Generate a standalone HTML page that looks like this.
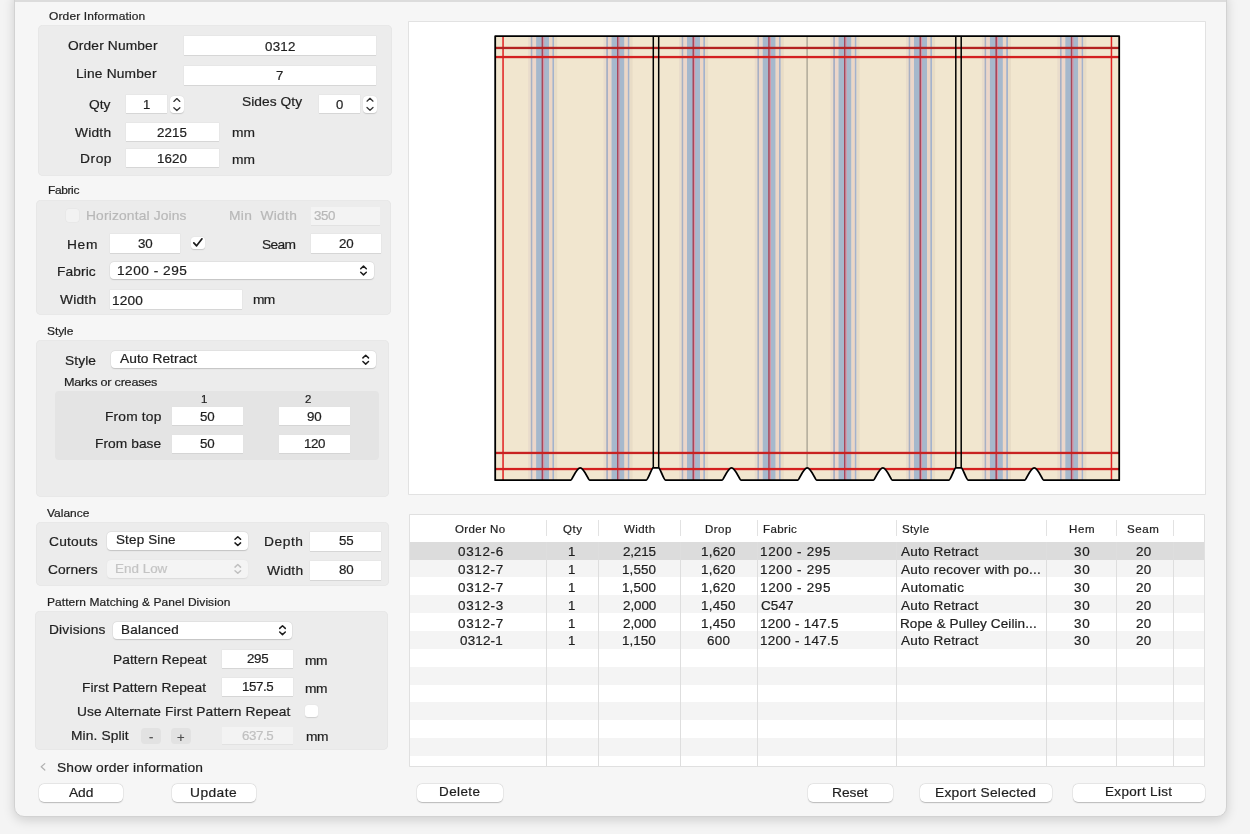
<!DOCTYPE html>
<html><head><meta charset="utf-8"><style>
html,body{margin:0;padding:0;width:1250px;height:834px;overflow:hidden;background:#f2f2f2;}
.t{position:absolute;white-space:pre;transform-origin:0 0;font-family:"Liberation Sans", sans-serif;-webkit-text-stroke:0.2px currentColor;}
#txt{position:absolute;left:0;top:0;width:1250px;height:834px;will-change:transform;}
#win{position:absolute;left:14px;top:-10px;width:1211px;height:825px;background:#f6f6f6;border:1px solid #d2d2d2;border-radius:10px;box-shadow:0 3px 12px rgba(0,0,0,0.16);}
</style></head><body>
<div style="position:absolute;left:0;top:0;width:1250px;height:834px;background:#f4f4f4"></div>
<div id="win"></div>
<div style="position:absolute;left:14.5px;top:0;width:1211px;height:1.6px;background:#dcdcdc"></div>
<div style="position:absolute;left:409.4px;top:22.4px;width:795.8px;height:472px;background:#fff;box-shadow:0 0 0 0.8px #dcdcdc;"></div>
<div style="position:absolute;left:38.00px;top:25.00px;width:353.50px;height:150.50px;background:#ececec;border-radius:5px;box-shadow:inset 0 0 0 0.6px #e4e4e4;"></div><div style="position:absolute;left:183.80px;top:36.20px;width:192.40px;height:19.00px;background:#fff;box-shadow:0 0.7px 0 #cfcfcf, 0 0 0 0.5px #e2e2e2;"></div><div style="position:absolute;left:183.80px;top:66.40px;width:192.40px;height:18.80px;background:#fff;box-shadow:0 0.7px 0 #cfcfcf, 0 0 0 0.5px #e2e2e2;"></div><div style="position:absolute;left:125.70px;top:95.20px;width:41.70px;height:18.20px;background:#fff;box-shadow:0 0.7px 0 #cfcfcf, 0 0 0 0.5px #e2e2e2;"></div><div style="position:absolute;left:319.00px;top:94.80px;width:41.00px;height:18.60px;background:#fff;box-shadow:0 0.7px 0 #cfcfcf, 0 0 0 0.5px #e2e2e2;"></div><div style="position:absolute;left:125.70px;top:122.60px;width:93.10px;height:18.40px;background:#fff;box-shadow:0 0.7px 0 #cfcfcf, 0 0 0 0.5px #e2e2e2;"></div><div style="position:absolute;left:125.70px;top:148.80px;width:93.10px;height:18.00px;background:#fff;box-shadow:0 0.7px 0 #cfcfcf, 0 0 0 0.5px #e2e2e2;"></div><div style="position:absolute;left:35.50px;top:199.50px;width:355.90px;height:115.20px;background:#ececec;border-radius:5px;box-shadow:inset 0 0 0 0.6px #e4e4e4;"></div><div style="position:absolute;left:66.00px;top:209.00px;width:13.10px;height:13.00px;background:#f2f2f2;border-radius:3px;box-shadow:0 0 0 0.5px #e4e4e4;"></div><div style="position:absolute;left:310.80px;top:206.50px;width:69.70px;height:18.00px;background:#f3f3f3;box-shadow:0 0.7px 0 #dedede;"></div><div style="position:absolute;left:110.20px;top:233.80px;width:70.00px;height:19.30px;background:#fff;box-shadow:0 0.7px 0 #cfcfcf, 0 0 0 0.5px #e2e2e2;"></div><div style="position:absolute;left:190.90px;top:236.60px;width:13.80px;height:12.00px;background:#fff;border-radius:3px;box-shadow:0 0.5px 1px #c8c8c8;"></div><div style="position:absolute;left:310.80px;top:234.00px;width:70.20px;height:19.30px;background:#fff;box-shadow:0 0.7px 0 #cfcfcf, 0 0 0 0.5px #e2e2e2;"></div><div style="position:absolute;left:109.50px;top:261.80px;width:264.30px;height:17.10px;background:#fff;border-radius:4px;box-shadow:0 0.6px 1px #c4c4c4, 0 0 0 0.5px #dedede;"></div><div style="position:absolute;left:110.20px;top:289.70px;width:131.40px;height:19.50px;background:#fff;box-shadow:0 0.7px 0 #cfcfcf, 0 0 0 0.5px #e2e2e2;"></div><div style="position:absolute;left:36.00px;top:340.20px;width:353.40px;height:156.80px;background:#ececec;border-radius:5px;box-shadow:inset 0 0 0 0.6px #e4e4e4;"></div><div style="position:absolute;left:111.20px;top:351.00px;width:264.60px;height:17.10px;background:#fff;border-radius:4px;box-shadow:0 0.6px 1px #c4c4c4, 0 0 0 0.5px #dedede;"></div><div style="position:absolute;left:54.50px;top:391.20px;width:324.10px;height:69.30px;background:#e4e4e4;border-radius:4px;"></div><div style="position:absolute;left:172.40px;top:406.90px;width:70.40px;height:18.20px;background:#fff;box-shadow:0 0.7px 0 #cfcfcf, 0 0 0 0.5px #e2e2e2;"></div><div style="position:absolute;left:279.40px;top:406.90px;width:70.60px;height:18.20px;background:#fff;box-shadow:0 0.7px 0 #cfcfcf, 0 0 0 0.5px #e2e2e2;"></div><div style="position:absolute;left:172.40px;top:435.20px;width:70.40px;height:18.10px;background:#fff;box-shadow:0 0.7px 0 #cfcfcf, 0 0 0 0.5px #e2e2e2;"></div><div style="position:absolute;left:279.40px;top:435.20px;width:70.60px;height:18.10px;background:#fff;box-shadow:0 0.7px 0 #cfcfcf, 0 0 0 0.5px #e2e2e2;"></div><div style="position:absolute;left:36.20px;top:522.00px;width:352.90px;height:63.50px;background:#ececec;border-radius:5px;box-shadow:inset 0 0 0 0.6px #e4e4e4;"></div><div style="position:absolute;left:107.10px;top:532.00px;width:140.80px;height:18.20px;background:#fff;border-radius:4px;box-shadow:0 0.6px 1px #c4c4c4, 0 0 0 0.5px #dedede;"></div><div style="position:absolute;left:107.10px;top:560.20px;width:140.80px;height:17.40px;background:#f4f4f4;border-radius:4px;box-shadow:0 0.6px 1px #dcdcdc;"></div><div style="position:absolute;left:310.40px;top:532.30px;width:71.00px;height:19.20px;background:#fff;box-shadow:0 0.7px 0 #cfcfcf, 0 0 0 0.5px #e2e2e2;"></div><div style="position:absolute;left:310.40px;top:561.20px;width:71.00px;height:19.20px;background:#fff;box-shadow:0 0.7px 0 #cfcfcf, 0 0 0 0.5px #e2e2e2;"></div><div style="position:absolute;left:35.10px;top:611.30px;width:353.40px;height:138.50px;background:#ececec;border-radius:5px;box-shadow:inset 0 0 0 0.6px #e4e4e4;"></div><div style="position:absolute;left:113.20px;top:621.70px;width:178.90px;height:17.10px;background:#fff;border-radius:4px;box-shadow:0 0.6px 1px #c4c4c4, 0 0 0 0.5px #dedede;"></div><div style="position:absolute;left:222.00px;top:649.50px;width:71.10px;height:18.60px;background:#fff;box-shadow:0 0.7px 0 #cfcfcf, 0 0 0 0.5px #e2e2e2;"></div><div style="position:absolute;left:222.00px;top:677.70px;width:71.10px;height:18.30px;background:#fff;box-shadow:0 0.7px 0 #cfcfcf, 0 0 0 0.5px #e2e2e2;"></div><div style="position:absolute;left:304.60px;top:704.60px;width:13.40px;height:12.80px;background:#fff;border-radius:3px;box-shadow:0 0.5px 1px #cfcfcf;"></div><div style="position:absolute;left:141.10px;top:727.60px;width:20.40px;height:16.60px;background:#e2e2e2;border-radius:4px;"></div><div style="position:absolute;left:170.70px;top:727.60px;width:20.00px;height:16.60px;background:#e2e2e2;border-radius:4px;"></div><div style="position:absolute;left:222.00px;top:726.70px;width:71.10px;height:17.60px;background:#f3f3f3;box-shadow:0 0.7px 0 #dedede;"></div><div style="position:absolute;left:38.60px;top:783.80px;width:84.90px;height:18.40px;background:#fff;border-radius:5px;box-shadow:0 0.6px 1.2px rgba(0,0,0,0.22), 0 0 0 0.4px rgba(0,0,0,0.07);"></div><div style="position:absolute;left:171.70px;top:783.80px;width:84.50px;height:18.40px;background:#fff;border-radius:5px;box-shadow:0 0.6px 1.2px rgba(0,0,0,0.22), 0 0 0 0.4px rgba(0,0,0,0.07);"></div><div style="position:absolute;left:417.20px;top:783.80px;width:85.60px;height:18.40px;background:#fff;border-radius:5px;box-shadow:0 0.6px 1.2px rgba(0,0,0,0.22), 0 0 0 0.4px rgba(0,0,0,0.07);"></div><div style="position:absolute;left:807.70px;top:783.80px;width:85.40px;height:18.40px;background:#fff;border-radius:5px;box-shadow:0 0.6px 1.2px rgba(0,0,0,0.22), 0 0 0 0.4px rgba(0,0,0,0.07);"></div><div style="position:absolute;left:920.20px;top:783.80px;width:132.00px;height:18.40px;background:#fff;border-radius:5px;box-shadow:0 0.6px 1.2px rgba(0,0,0,0.22), 0 0 0 0.4px rgba(0,0,0,0.07);"></div><div style="position:absolute;left:1073.40px;top:783.80px;width:131.20px;height:18.40px;background:#fff;border-radius:5px;box-shadow:0 0.6px 1.2px rgba(0,0,0,0.22), 0 0 0 0.4px rgba(0,0,0,0.07);"></div><div style="position:absolute;left:409.80px;top:515.40px;width:794.40px;height:250.20px;background:#fff;box-shadow:0 0 0 0.8px #dadada;"></div><div style="position:absolute;left:409.80px;top:541.80px;width:794.40px;height:17.85px;background:#dcdcdc;"></div><div style="position:absolute;left:409.80px;top:559.65px;width:794.40px;height:17.85px;background:#f4f4f4;"></div><div style="position:absolute;left:409.80px;top:595.35px;width:794.40px;height:17.85px;background:#f4f4f4;"></div><div style="position:absolute;left:409.80px;top:631.05px;width:794.40px;height:17.85px;background:#f4f4f4;"></div><div style="position:absolute;left:409.80px;top:666.75px;width:794.40px;height:17.85px;background:#f4f4f4;"></div><div style="position:absolute;left:409.80px;top:702.45px;width:794.40px;height:17.85px;background:#f4f4f4;"></div><div style="position:absolute;left:409.80px;top:738.15px;width:794.40px;height:17.85px;background:#f4f4f4;"></div><div style="position:absolute;left:546.00px;top:520.40px;width:1.00px;height:15.20px;background:#e2e2e2;"></div><div style="position:absolute;left:546.00px;top:541.80px;width:1.00px;height:223.80px;background:#dedede;"></div><div style="position:absolute;left:598.00px;top:520.40px;width:1.00px;height:15.20px;background:#e2e2e2;"></div><div style="position:absolute;left:598.00px;top:541.80px;width:1.00px;height:223.80px;background:#dedede;"></div><div style="position:absolute;left:679.70px;top:520.40px;width:1.00px;height:15.20px;background:#e2e2e2;"></div><div style="position:absolute;left:679.70px;top:541.80px;width:1.00px;height:223.80px;background:#dedede;"></div><div style="position:absolute;left:756.50px;top:520.40px;width:1.00px;height:15.20px;background:#e2e2e2;"></div><div style="position:absolute;left:756.50px;top:541.80px;width:1.00px;height:223.80px;background:#dedede;"></div><div style="position:absolute;left:896.30px;top:520.40px;width:1.00px;height:15.20px;background:#e2e2e2;"></div><div style="position:absolute;left:896.30px;top:541.80px;width:1.00px;height:223.80px;background:#dedede;"></div><div style="position:absolute;left:1046.10px;top:520.40px;width:1.00px;height:15.20px;background:#e2e2e2;"></div><div style="position:absolute;left:1046.10px;top:541.80px;width:1.00px;height:223.80px;background:#dedede;"></div><div style="position:absolute;left:1116.00px;top:520.40px;width:1.00px;height:15.20px;background:#e2e2e2;"></div><div style="position:absolute;left:1116.00px;top:541.80px;width:1.00px;height:223.80px;background:#dedede;"></div><div style="position:absolute;left:1172.70px;top:520.40px;width:1.00px;height:15.20px;background:#e2e2e2;"></div><div style="position:absolute;left:1172.70px;top:541.80px;width:1.00px;height:223.80px;background:#dedede;"></div><div style="position:absolute;left:169.9px;top:96px;width:13.900000000000006px;height:17.200000000000003px;background:#fff;border-radius:4px;box-shadow:0 0.5px 1px #c8c8c8;"></div><div style="position:absolute;left:362.8px;top:95.5px;width:14.399999999999977px;height:17.700000000000003px;background:#fff;border-radius:4px;box-shadow:0 0.5px 1px #c8c8c8;"></div>
<svg width="1250" height="834" viewBox="0 0 1250 834" style="position:absolute;left:0;top:0"><defs><clipPath id="cp"><path d="M495.2,36.2 L1119.2,36.2 L1119.2,480.2 L1043.82,480.2 C1042.22,480.2 1038.22,467.8 1034.22,467.8 L1034.22,467.8 C1030.22,467.8 1026.22,480.2 1024.6200000000001,480.2 L968.1500000000001,480.2 C966.5500000000001,480.2 962.5500000000001,467.8 961.5500000000001,467.8 L955.5500000000001,467.8 C954.5500000000001,467.8 950.5500000000001,480.2 948.95,480.2 L892.4800000000001,480.2 C890.8800000000001,480.2 886.8800000000001,467.8 882.8800000000001,467.8 L882.8800000000001,467.8 C878.8800000000001,467.8 874.8800000000001,480.2 873.2800000000001,480.2 L816.8100000000001,480.2 C815.21,480.2 811.21,467.8 807.21,467.8 L807.21,467.8 C803.21,467.8 799.21,480.2 797.61,480.2 L741.1400000000001,480.2 C739.5400000000001,480.2 735.5400000000001,467.8 731.5400000000001,467.8 L731.5400000000001,467.8 C727.5400000000001,467.8 723.5400000000001,480.2 721.94,480.2 L665.47,480.2 C663.87,480.2 659.87,467.8 658.87,467.8 L652.87,467.8 C651.87,467.8 647.87,480.2 646.27,480.2 L589.8000000000001,480.2 C588.2,480.2 584.2,467.8 580.2,467.8 L580.2,467.8 C576.2,467.8 572.2,480.2 570.6,480.2 L495.2,480.2 Z"/></clipPath></defs><g clip-path="url(#cp)"><rect x="495.2" y="36.2" width="624.0" height="444.0" fill="#f1e6cf"/><rect x="528.1" y="36.2" width="3" height="444.0" fill="#e9dccb"/><rect x="530.8000000000001" y="36.2" width="1.8" height="444.0" fill="#a8b0c4"/><rect x="532.6" y="36.2" width="3.5" height="444.0" fill="#ecd6ca"/><rect x="536.1" y="36.2" width="13" height="444.0" fill="#a6b8cc"/><rect x="541.6" y="36.2" width="1.6" height="444.0" fill="#a8465a"/><rect x="543.2" y="36.2" width="1" height="444.0" fill="#e090a0"/><rect x="549.1" y="36.2" width="3.3" height="444.0" fill="#ecd6c6"/><rect x="552.4" y="36.2" width="1.8" height="444.0" fill="#a4b2cc"/><rect x="554.2" y="36.2" width="3" height="444.0" fill="#e8dcc6"/><rect x="603.5" y="36.2" width="3" height="444.0" fill="#e9dccb"/><rect x="606.2" y="36.2" width="1.8" height="444.0" fill="#a8b0c4"/><rect x="608" y="36.2" width="3.5" height="444.0" fill="#ecd6ca"/><rect x="611.5" y="36.2" width="13" height="444.0" fill="#a6b8cc"/><rect x="617" y="36.2" width="1.6" height="444.0" fill="#a8465a"/><rect x="618.6" y="36.2" width="1" height="444.0" fill="#e090a0"/><rect x="624.5" y="36.2" width="3.3" height="444.0" fill="#ecd6c6"/><rect x="627.8" y="36.2" width="1.8" height="444.0" fill="#a4b2cc"/><rect x="629.6" y="36.2" width="3" height="444.0" fill="#e8dcc6"/><rect x="679.0" y="36.2" width="3" height="444.0" fill="#e9dccb"/><rect x="681.7" y="36.2" width="1.8" height="444.0" fill="#a8b0c4"/><rect x="683.5" y="36.2" width="3.5" height="444.0" fill="#ecd6ca"/><rect x="687.0" y="36.2" width="13" height="444.0" fill="#a6b8cc"/><rect x="692.5" y="36.2" width="1.6" height="444.0" fill="#a8465a"/><rect x="694.1" y="36.2" width="1" height="444.0" fill="#e090a0"/><rect x="700.0" y="36.2" width="3.3" height="444.0" fill="#ecd6c6"/><rect x="703.3" y="36.2" width="1.8" height="444.0" fill="#a4b2cc"/><rect x="705.1" y="36.2" width="3" height="444.0" fill="#e8dcc6"/><rect x="754.7" y="36.2" width="3" height="444.0" fill="#e9dccb"/><rect x="757.4000000000001" y="36.2" width="1.8" height="444.0" fill="#a8b0c4"/><rect x="759.2" y="36.2" width="3.5" height="444.0" fill="#ecd6ca"/><rect x="762.7" y="36.2" width="13" height="444.0" fill="#a6b8cc"/><rect x="768.2" y="36.2" width="1.6" height="444.0" fill="#a8465a"/><rect x="769.8000000000001" y="36.2" width="1" height="444.0" fill="#e090a0"/><rect x="775.7" y="36.2" width="3.3" height="444.0" fill="#ecd6c6"/><rect x="779.0" y="36.2" width="1.8" height="444.0" fill="#a4b2cc"/><rect x="780.8000000000001" y="36.2" width="3" height="444.0" fill="#e8dcc6"/><rect x="830.5" y="36.2" width="3" height="444.0" fill="#e9dccb"/><rect x="833.2" y="36.2" width="1.8" height="444.0" fill="#a8b0c4"/><rect x="835" y="36.2" width="3.5" height="444.0" fill="#ecd6ca"/><rect x="838.5" y="36.2" width="13" height="444.0" fill="#a6b8cc"/><rect x="844" y="36.2" width="1.6" height="444.0" fill="#a8465a"/><rect x="845.6" y="36.2" width="1" height="444.0" fill="#e090a0"/><rect x="851.5" y="36.2" width="3.3" height="444.0" fill="#ecd6c6"/><rect x="854.8" y="36.2" width="1.8" height="444.0" fill="#a4b2cc"/><rect x="856.6" y="36.2" width="3" height="444.0" fill="#e8dcc6"/><rect x="906.0" y="36.2" width="3" height="444.0" fill="#e9dccb"/><rect x="908.7" y="36.2" width="1.8" height="444.0" fill="#a8b0c4"/><rect x="910.5" y="36.2" width="3.5" height="444.0" fill="#ecd6ca"/><rect x="914.0" y="36.2" width="13" height="444.0" fill="#a6b8cc"/><rect x="919.5" y="36.2" width="1.6" height="444.0" fill="#a8465a"/><rect x="921.1" y="36.2" width="1" height="444.0" fill="#e090a0"/><rect x="927.0" y="36.2" width="3.3" height="444.0" fill="#ecd6c6"/><rect x="930.3" y="36.2" width="1.8" height="444.0" fill="#a4b2cc"/><rect x="932.1" y="36.2" width="3" height="444.0" fill="#e8dcc6"/><rect x="981.9" y="36.2" width="3" height="444.0" fill="#e9dccb"/><rect x="984.6" y="36.2" width="1.8" height="444.0" fill="#a8b0c4"/><rect x="986.4" y="36.2" width="3.5" height="444.0" fill="#ecd6ca"/><rect x="989.9" y="36.2" width="13" height="444.0" fill="#a6b8cc"/><rect x="995.4" y="36.2" width="1.6" height="444.0" fill="#a8465a"/><rect x="997.0" y="36.2" width="1" height="444.0" fill="#e090a0"/><rect x="1002.9" y="36.2" width="3.3" height="444.0" fill="#ecd6c6"/><rect x="1006.1999999999999" y="36.2" width="1.8" height="444.0" fill="#a4b2cc"/><rect x="1008.0" y="36.2" width="3" height="444.0" fill="#e8dcc6"/><rect x="1057.3" y="36.2" width="3" height="444.0" fill="#e9dccb"/><rect x="1060.0" y="36.2" width="1.8" height="444.0" fill="#a8b0c4"/><rect x="1061.8" y="36.2" width="3.5" height="444.0" fill="#ecd6ca"/><rect x="1065.3" y="36.2" width="13" height="444.0" fill="#a6b8cc"/><rect x="1070.8" y="36.2" width="1.6" height="444.0" fill="#a8465a"/><rect x="1072.3999999999999" y="36.2" width="1" height="444.0" fill="#e090a0"/><rect x="1078.3" y="36.2" width="3.3" height="444.0" fill="#ecd6c6"/><rect x="1081.6" y="36.2" width="1.8" height="444.0" fill="#a4b2cc"/><rect x="1083.3999999999999" y="36.2" width="3" height="444.0" fill="#e8dcc6"/><rect x="806.5" y="36.2" width="1.2" height="444.0" fill="#a09a8c"/><rect x="502.3" y="36.2" width="1.5" height="444.0" fill="#e02020"/><rect x="1110.7" y="36.2" width="1.5" height="444.0" fill="#e02020"/><rect x="495.2" y="46.8" width="624.0" height="2.3" fill="#b42222"/><rect x="495.2" y="55.9" width="624.0" height="2.3" fill="#d42020"/><rect x="495.2" y="451.8" width="624.0" height="2.3" fill="#c82222"/><rect x="495.2" y="467.9" width="624.0" height="2.3" fill="#d42020"/></g><path d="M495.2,36.2 L1119.2,36.2 L1119.2,480.2 L1043.82,480.2 C1042.22,480.2 1038.22,467.8 1034.22,467.8 L1034.22,467.8 C1030.22,467.8 1026.22,480.2 1024.6200000000001,480.2 L968.1500000000001,480.2 C966.5500000000001,480.2 962.5500000000001,467.8 961.5500000000001,467.8 L955.5500000000001,467.8 C954.5500000000001,467.8 950.5500000000001,480.2 948.95,480.2 L892.4800000000001,480.2 C890.8800000000001,480.2 886.8800000000001,467.8 882.8800000000001,467.8 L882.8800000000001,467.8 C878.8800000000001,467.8 874.8800000000001,480.2 873.2800000000001,480.2 L816.8100000000001,480.2 C815.21,480.2 811.21,467.8 807.21,467.8 L807.21,467.8 C803.21,467.8 799.21,480.2 797.61,480.2 L741.1400000000001,480.2 C739.5400000000001,480.2 735.5400000000001,467.8 731.5400000000001,467.8 L731.5400000000001,467.8 C727.5400000000001,467.8 723.5400000000001,480.2 721.94,480.2 L665.47,480.2 C663.87,480.2 659.87,467.8 658.87,467.8 L652.87,467.8 C651.87,467.8 647.87,480.2 646.27,480.2 L589.8000000000001,480.2 C588.2,480.2 584.2,467.8 580.2,467.8 L580.2,467.8 C576.2,467.8 572.2,480.2 570.6,480.2 L495.2,480.2 Z" fill="none" stroke="#000" stroke-width="1.8" stroke-linejoin="round"/><line x1="653.3" y1="36.2" x2="653.3" y2="467.8" stroke="#000" stroke-width="1.5"/><line x1="658.7" y1="36.2" x2="658.7" y2="467.8" stroke="#000" stroke-width="1.5"/><line x1="955.8" y1="36.2" x2="955.8" y2="467.8" stroke="#000" stroke-width="1.5"/><line x1="961.2" y1="36.2" x2="961.2" y2="467.8" stroke="#000" stroke-width="1.5"/></svg>
<svg width="1250" height="834" viewBox="0 0 1250 834" style="position:absolute;left:0;top:0"><path d="M360.7,268.7 L363.5,266.1 L366.3,268.7 M360.7,272.3 L363.5,274.9 L366.3,272.3" fill="none" stroke="#1c1c1c" stroke-width="1.5" stroke-linecap="round" stroke-linejoin="round"/><path d="M362.9,357.9 L365.7,355.3 L368.5,357.9 M362.9,361.5 L365.7,364.09999999999997 L368.5,361.5" fill="none" stroke="#1c1c1c" stroke-width="1.5" stroke-linecap="round" stroke-linejoin="round"/><path d="M235.0,539.3000000000001 L237.8,536.7 L240.60000000000002,539.3000000000001 M235.0,542.9 L237.8,545.5 L240.60000000000002,542.9" fill="none" stroke="#1c1c1c" stroke-width="1.5" stroke-linecap="round" stroke-linejoin="round"/><path d="M235.0,567.1 L237.8,564.5 L240.60000000000002,567.1 M235.0,570.6999999999999 L237.8,573.3 L240.60000000000002,570.6999999999999" fill="none" stroke="#c0c0c0" stroke-width="1.5" stroke-linecap="round" stroke-linejoin="round"/><path d="M279.7,628.4000000000001 L282.5,625.8000000000001 L285.3,628.4000000000001 M279.7,632.0 L282.5,634.6 L285.3,632.0" fill="none" stroke="#1c1c1c" stroke-width="1.5" stroke-linecap="round" stroke-linejoin="round"/><path d="M193.8,242.8 L196.6,245.8 L202,238.8" fill="none" stroke="#1a1a1a" stroke-width="1.7" stroke-linecap="round" stroke-linejoin="round"/><path d="M44.8,763.6 L41.2,766.8 L44.8,770" fill="none" stroke="#b0b0b0" stroke-width="1.2" stroke-linecap="round" stroke-linejoin="round"/><path d="M173.85000000000002,101.39999999999999 L176.85000000000002,98.6 L179.85000000000002,101.39999999999999 M173.85000000000002,107.8 L176.85000000000002,110.6 L179.85000000000002,107.8" fill="none" stroke="#333" stroke-width="1.3" stroke-linecap="round" stroke-linejoin="round"/><path d="M367.0,101.14999999999999 L370.0,98.35 L373.0,101.14999999999999 M367.0,107.55 L370.0,110.35 L373.0,107.55" fill="none" stroke="#333" stroke-width="1.3" stroke-linecap="round" stroke-linejoin="round"/></svg>
<div id="txt"><div class="t" style="left:49.10px;top:11.29px;font-size:10.6px;line-height:10.6px;letter-spacing:0.133px;color:#1f1f1f;transform:scaleX(1.13)">Order Information</div><div class="t" style="left:67.60px;top:40.43px;font-size:12.2px;line-height:12.2px;letter-spacing:0.117px;color:#1f1f1f;transform:scaleX(1.13)">Order Number</div><div class="t" style="left:265.10px;top:41.69px;font-size:11.9px;line-height:11.9px;letter-spacing:0.202px;color:#1f1f1f;transform:scaleX(1.12)">0312</div><div class="t" style="left:76.47px;top:68.03px;font-size:12.2px;line-height:12.2px;letter-spacing:0.144px;color:#1f1f1f;transform:scaleX(1.13)">Line Number</div><div class="t" style="left:276.15px;top:71.39px;font-size:11.9px;line-height:11.9px;letter-spacing:0.000px;color:#1f1f1f;transform:scaleX(1.1)">7</div><div class="t" style="left:89.20px;top:99.03px;font-size:12.2px;line-height:12.2px;letter-spacing:-0.031px;color:#1f1f1f;transform:scaleX(1.13)">Qty</div><div class="t" style="left:142.65px;top:99.89px;font-size:11.9px;line-height:11.9px;letter-spacing:0.000px;color:#1f1f1f;transform:scaleX(1.1)">1</div><div class="t" style="left:242.40px;top:96.13px;font-size:12.2px;line-height:12.2px;letter-spacing:0.045px;color:#1f1f1f;transform:scaleX(1.13)">Sides Qty</div><div class="t" style="left:335.65px;top:99.89px;font-size:11.9px;line-height:11.9px;letter-spacing:0.000px;color:#1f1f1f;transform:scaleX(1.1)">0</div><div class="t" style="left:74.70px;top:126.83px;font-size:12.2px;line-height:12.2px;letter-spacing:0.192px;color:#1f1f1f;transform:scaleX(1.13)">Width</div><div class="t" style="left:157.45px;top:127.68px;font-size:11.9px;line-height:11.9px;letter-spacing:0.113px;color:#1f1f1f;transform:scaleX(1.12)">2215</div><div class="t" style="left:231.80px;top:127.23px;font-size:12.2px;line-height:12.2px;letter-spacing:-0.000px;color:#1f1f1f;transform:scaleX(1.13)">mm</div><div class="t" style="left:79.57px;top:152.73px;font-size:12.2px;line-height:12.2px;letter-spacing:0.487px;color:#1f1f1f;transform:scaleX(1.13)">Drop</div><div class="t" style="left:157.45px;top:153.58px;font-size:11.9px;line-height:11.9px;letter-spacing:0.113px;color:#1f1f1f;transform:scaleX(1.12)">1620</div><div class="t" style="left:231.80px;top:153.53px;font-size:12.2px;line-height:12.2px;letter-spacing:-0.000px;color:#1f1f1f;transform:scaleX(1.13)">mm</div><div class="t" style="left:47.80px;top:184.69px;font-size:10.6px;line-height:10.6px;letter-spacing:-0.336px;color:#1f1f1f;transform:scaleX(1.13)">Fabric</div><div class="t" style="left:85.87px;top:209.83px;font-size:12.2px;line-height:12.2px;letter-spacing:0.149px;color:#b8b8b8;transform:scaleX(1.13)">Horizontal Joins</div><div class="t" style="left:228.77px;top:209.73px;font-size:12.2px;line-height:12.2px;letter-spacing:0.277px;color:#b8b8b8;transform:scaleX(1.13)">Min  Width</div><div class="t" style="left:314.20px;top:211.48px;font-size:11.9px;line-height:11.9px;letter-spacing:-0.402px;color:#b8b8b8;transform:scaleX(1.12)">350</div><div class="t" style="left:66.57px;top:238.63px;font-size:12.2px;line-height:12.2px;letter-spacing:0.566px;color:#1f1f1f;transform:scaleX(1.13)">Hem</div><div class="t" style="left:138.05px;top:239.08px;font-size:11.9px;line-height:11.9px;letter-spacing:-0.054px;color:#1f1f1f;transform:scaleX(1.12)">30</div><div class="t" style="left:262.10px;top:238.63px;font-size:12.2px;line-height:12.2px;letter-spacing:-0.578px;color:#1f1f1f;transform:scaleX(1.13)">Seam</div><div class="t" style="left:338.65px;top:239.28px;font-size:11.9px;line-height:11.9px;letter-spacing:-0.054px;color:#1f1f1f;transform:scaleX(1.12)">20</div><div class="t" style="left:57.27px;top:265.83px;font-size:12.2px;line-height:12.2px;letter-spacing:0.073px;color:#1f1f1f;transform:scaleX(1.13)">Fabric</div><div class="t" style="left:116.68px;top:265.03px;font-size:12.2px;line-height:12.2px;letter-spacing:0.462px;color:#1f1f1f;transform:scaleX(1.12)">1200 - 295</div><div class="t" style="left:60.20px;top:293.83px;font-size:12.2px;line-height:12.2px;letter-spacing:0.192px;color:#1f1f1f;transform:scaleX(1.13)">Width</div><div class="t" style="left:112.48px;top:295.33px;font-size:12.2px;line-height:12.2px;letter-spacing:0.173px;color:#1f1f1f;transform:scaleX(1.12)">1200</div><div class="t" style="left:252.90px;top:294.03px;font-size:12.2px;line-height:12.2px;letter-spacing:-0.708px;color:#1f1f1f;transform:scaleX(1.13)">mm</div><div class="t" style="left:46.80px;top:325.99px;font-size:10.6px;line-height:10.6px;letter-spacing:-0.071px;color:#1f1f1f;transform:scaleX(1.13)">Style</div><div class="t" style="left:64.70px;top:354.93px;font-size:12.2px;line-height:12.2px;letter-spacing:0.086px;color:#1f1f1f;transform:scaleX(1.13)">Style</div><div class="t" style="left:120.10px;top:352.93px;font-size:12.2px;line-height:12.2px;letter-spacing:0.045px;color:#1f1f1f;transform:scaleX(1.13)">Auto Retract</div><div class="t" style="left:64.37px;top:376.58px;font-size:11.2px;line-height:11.2px;letter-spacing:-0.209px;color:#1f1f1f;transform:scaleX(1.13)">Marks or creases</div><div class="t" style="left:200.60px;top:395.46px;font-size:10.4px;line-height:10.4px;letter-spacing:0.000px;color:#1f1f1f;transform:scaleX(1.1)">1</div><div class="t" style="left:305.20px;top:395.46px;font-size:10.4px;line-height:10.4px;letter-spacing:0.000px;color:#1f1f1f;transform:scaleX(1.1)">2</div><div class="t" style="left:104.57px;top:410.93px;font-size:12.2px;line-height:12.2px;letter-spacing:0.159px;color:#1f1f1f;transform:scaleX(1.13)">From top</div><div class="t" style="left:200.35px;top:411.79px;font-size:11.9px;line-height:11.9px;letter-spacing:-0.054px;color:#1f1f1f;transform:scaleX(1.12)">50</div><div class="t" style="left:307.45px;top:411.79px;font-size:11.9px;line-height:11.9px;letter-spacing:-0.054px;color:#1f1f1f;transform:scaleX(1.12)">90</div><div class="t" style="left:95.27px;top:438.13px;font-size:12.2px;line-height:12.2px;letter-spacing:0.043px;color:#1f1f1f;transform:scaleX(1.13)">From base</div><div class="t" style="left:200.35px;top:439.49px;font-size:11.9px;line-height:11.9px;letter-spacing:-0.054px;color:#1f1f1f;transform:scaleX(1.12)">50</div><div class="t" style="left:303.95px;top:439.49px;font-size:11.9px;line-height:11.9px;letter-spacing:-0.402px;color:#1f1f1f;transform:scaleX(1.12)">120</div><div class="t" style="left:47.20px;top:508.19px;font-size:10.6px;line-height:10.6px;letter-spacing:-0.001px;color:#1f1f1f;transform:scaleX(1.13)">Valance</div><div class="t" style="left:48.50px;top:536.03px;font-size:12.2px;line-height:12.2px;letter-spacing:0.183px;color:#1f1f1f;transform:scaleX(1.13)">Cutouts</div><div class="t" style="left:115.70px;top:535.49px;font-size:11.9px;line-height:11.9px;letter-spacing:0.137px;color:#1f1f1f;transform:scaleX(1.13)">Step Sine</div><div class="t" style="left:48.00px;top:563.63px;font-size:12.2px;line-height:12.2px;letter-spacing:0.090px;color:#1f1f1f;transform:scaleX(1.13)">Corners</div><div class="t" style="left:114.57px;top:563.88px;font-size:11.9px;line-height:11.9px;letter-spacing:0.003px;color:#c4c4c4;transform:scaleX(1.13)">End Low</div><div class="t" style="left:264.17px;top:535.63px;font-size:12.2px;line-height:12.2px;letter-spacing:0.480px;color:#1f1f1f;transform:scaleX(1.13)">Depth</div><div class="t" style="left:338.65px;top:536.49px;font-size:11.9px;line-height:11.9px;letter-spacing:-0.054px;color:#1f1f1f;transform:scaleX(1.12)">55</div><div class="t" style="left:266.60px;top:564.63px;font-size:12.2px;line-height:12.2px;letter-spacing:0.192px;color:#1f1f1f;transform:scaleX(1.13)">Width</div><div class="t" style="left:338.65px;top:565.28px;font-size:11.9px;line-height:11.9px;letter-spacing:-0.054px;color:#1f1f1f;transform:scaleX(1.12)">80</div><div class="t" style="left:47.30px;top:597.29px;font-size:10.6px;line-height:10.6px;letter-spacing:0.064px;color:#1f1f1f;transform:scaleX(1.13)">Pattern Matching &amp; Panel Division</div><div class="t" style="left:48.67px;top:624.43px;font-size:12.2px;line-height:12.2px;letter-spacing:0.150px;color:#1f1f1f;transform:scaleX(1.13)">Divisions</div><div class="t" style="left:121.07px;top:624.68px;font-size:11.9px;line-height:11.9px;letter-spacing:0.223px;color:#1f1f1f;transform:scaleX(1.13)">Balanced</div><div class="t" style="left:113.47px;top:653.63px;font-size:12.2px;line-height:12.2px;letter-spacing:0.059px;color:#1f1f1f;transform:scaleX(1.13)">Pattern Repeat</div><div class="t" style="left:246.60px;top:653.88px;font-size:11.9px;line-height:11.9px;letter-spacing:-0.268px;color:#1f1f1f;transform:scaleX(1.12)">295</div><div class="t" style="left:304.60px;top:654.93px;font-size:12.2px;line-height:12.2px;letter-spacing:-0.442px;color:#1f1f1f;transform:scaleX(1.13)">mm</div><div class="t" style="left:81.87px;top:681.93px;font-size:12.2px;line-height:12.2px;letter-spacing:0.039px;color:#1f1f1f;transform:scaleX(1.13)">First Pattern Repeat</div><div class="t" style="left:241.50px;top:682.18px;font-size:11.9px;line-height:11.9px;letter-spacing:-0.357px;color:#1f1f1f;transform:scaleX(1.12)">157.5</div><div class="t" style="left:304.60px;top:683.13px;font-size:12.2px;line-height:12.2px;letter-spacing:-0.442px;color:#1f1f1f;transform:scaleX(1.13)">mm</div><div class="t" style="left:77.37px;top:706.33px;font-size:12.2px;line-height:12.2px;letter-spacing:0.098px;color:#1f1f1f;transform:scaleX(1.13)">Use Alternate First Pattern Repeat</div><div class="t" style="left:70.67px;top:730.43px;font-size:12.2px;line-height:12.2px;letter-spacing:0.098px;color:#1f1f1f;transform:scaleX(1.13)">Min. Split</div><div class="t" style="left:149.10px;top:732.49px;font-size:11.9px;line-height:11.9px;letter-spacing:0.000px;color:#505050;transform:scaleX(1.1)">-</div><div class="t" style="left:176.85px;top:733.09px;font-size:11.9px;line-height:11.9px;letter-spacing:0.000px;color:#505050;transform:scaleX(1.1)">+</div><div class="t" style="left:241.50px;top:730.68px;font-size:11.9px;line-height:11.9px;letter-spacing:-0.357px;color:#c0c0c0;transform:scaleX(1.12)">637.5</div><div class="t" style="left:305.60px;top:730.63px;font-size:12.2px;line-height:12.2px;letter-spacing:-0.442px;color:#1f1f1f;transform:scaleX(1.13)">mm</div><div class="t" style="left:56.50px;top:761.73px;font-size:12.2px;line-height:12.2px;letter-spacing:0.148px;color:#1f1f1f;transform:scaleX(1.13)">Show order information</div><div class="t" style="left:69.40px;top:787.23px;font-size:12.2px;line-height:12.2px;letter-spacing:-0.058px;color:#1f1f1f;transform:scaleX(1.13)">Add</div><div class="t" style="left:190.17px;top:787.23px;font-size:12.2px;line-height:12.2px;letter-spacing:0.382px;color:#1f1f1f;transform:scaleX(1.13)">Update</div><div class="t" style="left:439.15px;top:787.49px;font-size:11.9px;line-height:11.9px;letter-spacing:0.380px;color:#1f1f1f;transform:scaleX(1.13)">Delete</div><div class="t" style="left:831.67px;top:787.23px;font-size:12.2px;line-height:12.2px;letter-spacing:-0.029px;color:#1f1f1f;transform:scaleX(1.13)">Reset</div><div class="t" style="left:934.87px;top:787.23px;font-size:12.2px;line-height:12.2px;letter-spacing:0.231px;color:#1f1f1f;transform:scaleX(1.13)">Export Selected</div><div class="t" style="left:1105.01px;top:787.49px;font-size:11.9px;line-height:11.9px;letter-spacing:0.316px;color:#1f1f1f;transform:scaleX(1.13)">Export List</div><div class="t" style="left:455.40px;top:524.63px;font-size:10.2px;line-height:10.2px;letter-spacing:0.345px;color:#1f1f1f;transform:scaleX(1.13)">Order No</div><div class="t" style="left:562.94px;top:524.63px;font-size:10.2px;line-height:10.2px;letter-spacing:0.460px;color:#1f1f1f;transform:scaleX(1.13)">Qty</div><div class="t" style="left:624.07px;top:524.63px;font-size:10.2px;line-height:10.2px;letter-spacing:0.374px;color:#1f1f1f;transform:scaleX(1.13)">Width</div><div class="t" style="left:705.46px;top:524.63px;font-size:10.2px;line-height:10.2px;letter-spacing:0.422px;color:#1f1f1f;transform:scaleX(1.13)">Drop</div><div class="t" style="left:763.20px;top:524.63px;font-size:10.2px;line-height:10.2px;letter-spacing:0.322px;color:#1f1f1f;transform:scaleX(1.13)">Fabric</div><div class="t" style="left:902.30px;top:524.63px;font-size:10.2px;line-height:10.2px;letter-spacing:0.331px;color:#1f1f1f;transform:scaleX(1.13)">Style</div><div class="t" style="left:1068.95px;top:524.63px;font-size:10.2px;line-height:10.2px;letter-spacing:0.604px;color:#1f1f1f;transform:scaleX(1.13)">Hem</div><div class="t" style="left:1126.67px;top:524.63px;font-size:10.2px;line-height:10.2px;letter-spacing:0.518px;color:#1f1f1f;transform:scaleX(1.13)">Seam</div><div class="t" style="left:458.35px;top:546.10px;font-size:12.0px;line-height:12.0px;letter-spacing:0.582px;color:#1f1f1f;transform:scaleX(1.12)">0312-6</div><div class="t" style="left:568.10px;top:546.10px;font-size:12.0px;line-height:12.0px;letter-spacing:0.000px;color:#1f1f1f;transform:scaleX(1.1)">1</div><div class="t" style="left:623.05px;top:546.10px;font-size:12.0px;line-height:12.0px;letter-spacing:-0.156px;color:#1f1f1f;transform:scaleX(1.12)">2,215</div><div class="t" style="left:700.88px;top:546.10px;font-size:12.0px;line-height:12.0px;letter-spacing:0.205px;color:#1f1f1f;transform:scaleX(1.12)">1,620</div><div class="t" style="left:760.28px;top:546.10px;font-size:12.0px;line-height:12.0px;letter-spacing:0.613px;color:#1f1f1f;transform:scaleX(1.12)">1200 - 295</div><div class="t" style="left:900.70px;top:546.10px;font-size:12.0px;line-height:12.0px;letter-spacing:0.144px;color:#1f1f1f;transform:scaleX(1.13)">Auto Retract</div><div class="t" style="left:1073.50px;top:546.10px;font-size:12.0px;line-height:12.0px;letter-spacing:0.750px;color:#1f1f1f;transform:scaleX(1.12)">30</div><div class="t" style="left:1135.60px;top:546.10px;font-size:12.0px;line-height:12.0px;letter-spacing:0.214px;color:#1f1f1f;transform:scaleX(1.12)">20</div><div class="t" style="left:458.35px;top:563.95px;font-size:12.0px;line-height:12.0px;letter-spacing:0.582px;color:#1f1f1f;transform:scaleX(1.12)">0312-7</div><div class="t" style="left:568.10px;top:563.95px;font-size:12.0px;line-height:12.0px;letter-spacing:0.000px;color:#1f1f1f;transform:scaleX(1.1)">1</div><div class="t" style="left:621.93px;top:563.95px;font-size:12.0px;line-height:12.0px;letter-spacing:0.094px;color:#1f1f1f;transform:scaleX(1.12)">1,550</div><div class="t" style="left:700.88px;top:563.95px;font-size:12.0px;line-height:12.0px;letter-spacing:0.205px;color:#1f1f1f;transform:scaleX(1.12)">1,620</div><div class="t" style="left:760.28px;top:563.95px;font-size:12.0px;line-height:12.0px;letter-spacing:0.613px;color:#1f1f1f;transform:scaleX(1.12)">1200 - 295</div><div class="t" style="left:900.70px;top:563.95px;font-size:12.0px;line-height:12.0px;letter-spacing:0.198px;color:#1f1f1f;transform:scaleX(1.13)">Auto recover with po...</div><div class="t" style="left:1073.50px;top:563.95px;font-size:12.0px;line-height:12.0px;letter-spacing:0.750px;color:#1f1f1f;transform:scaleX(1.12)">30</div><div class="t" style="left:1135.60px;top:563.95px;font-size:12.0px;line-height:12.0px;letter-spacing:0.214px;color:#1f1f1f;transform:scaleX(1.12)">20</div><div class="t" style="left:458.35px;top:581.80px;font-size:12.0px;line-height:12.0px;letter-spacing:0.582px;color:#1f1f1f;transform:scaleX(1.12)">0312-7</div><div class="t" style="left:568.10px;top:581.80px;font-size:12.0px;line-height:12.0px;letter-spacing:0.000px;color:#1f1f1f;transform:scaleX(1.1)">1</div><div class="t" style="left:621.93px;top:581.80px;font-size:12.0px;line-height:12.0px;letter-spacing:0.094px;color:#1f1f1f;transform:scaleX(1.12)">1,500</div><div class="t" style="left:700.88px;top:581.80px;font-size:12.0px;line-height:12.0px;letter-spacing:0.205px;color:#1f1f1f;transform:scaleX(1.12)">1,620</div><div class="t" style="left:760.28px;top:581.80px;font-size:12.0px;line-height:12.0px;letter-spacing:0.613px;color:#1f1f1f;transform:scaleX(1.12)">1200 - 295</div><div class="t" style="left:900.70px;top:581.80px;font-size:12.0px;line-height:12.0px;letter-spacing:0.300px;color:#1f1f1f;transform:scaleX(1.13)">Automatic</div><div class="t" style="left:1073.50px;top:581.80px;font-size:12.0px;line-height:12.0px;letter-spacing:0.750px;color:#1f1f1f;transform:scaleX(1.12)">30</div><div class="t" style="left:1135.60px;top:581.80px;font-size:12.0px;line-height:12.0px;letter-spacing:0.214px;color:#1f1f1f;transform:scaleX(1.12)">20</div><div class="t" style="left:458.35px;top:599.65px;font-size:12.0px;line-height:12.0px;letter-spacing:0.582px;color:#1f1f1f;transform:scaleX(1.12)">0312-3</div><div class="t" style="left:568.10px;top:599.65px;font-size:12.0px;line-height:12.0px;letter-spacing:0.000px;color:#1f1f1f;transform:scaleX(1.1)">1</div><div class="t" style="left:622.90px;top:599.65px;font-size:12.0px;line-height:12.0px;letter-spacing:-0.089px;color:#1f1f1f;transform:scaleX(1.12)">2,000</div><div class="t" style="left:700.88px;top:599.65px;font-size:12.0px;line-height:12.0px;letter-spacing:0.205px;color:#1f1f1f;transform:scaleX(1.12)">1,450</div><div class="t" style="left:761.40px;top:599.65px;font-size:12.0px;line-height:12.0px;letter-spacing:0.038px;color:#1f1f1f;transform:scaleX(1.13)">C547</div><div class="t" style="left:900.70px;top:599.65px;font-size:12.0px;line-height:12.0px;letter-spacing:0.144px;color:#1f1f1f;transform:scaleX(1.13)">Auto Retract</div><div class="t" style="left:1073.50px;top:599.65px;font-size:12.0px;line-height:12.0px;letter-spacing:0.750px;color:#1f1f1f;transform:scaleX(1.12)">30</div><div class="t" style="left:1135.60px;top:599.65px;font-size:12.0px;line-height:12.0px;letter-spacing:0.214px;color:#1f1f1f;transform:scaleX(1.12)">20</div><div class="t" style="left:458.35px;top:617.50px;font-size:12.0px;line-height:12.0px;letter-spacing:0.582px;color:#1f1f1f;transform:scaleX(1.12)">0312-7</div><div class="t" style="left:568.10px;top:617.50px;font-size:12.0px;line-height:12.0px;letter-spacing:0.000px;color:#1f1f1f;transform:scaleX(1.1)">1</div><div class="t" style="left:622.90px;top:617.50px;font-size:12.0px;line-height:12.0px;letter-spacing:-0.089px;color:#1f1f1f;transform:scaleX(1.12)">2,000</div><div class="t" style="left:700.88px;top:617.50px;font-size:12.0px;line-height:12.0px;letter-spacing:0.205px;color:#1f1f1f;transform:scaleX(1.12)">1,450</div><div class="t" style="left:760.28px;top:617.50px;font-size:12.0px;line-height:12.0px;letter-spacing:0.234px;color:#1f1f1f;transform:scaleX(1.12)">1200 - 147.5</div><div class="t" style="left:899.57px;top:617.50px;font-size:12.0px;line-height:12.0px;letter-spacing:0.071px;color:#1f1f1f;transform:scaleX(1.13)">Rope &amp; Pulley Ceilin...</div><div class="t" style="left:1073.50px;top:617.50px;font-size:12.0px;line-height:12.0px;letter-spacing:0.750px;color:#1f1f1f;transform:scaleX(1.12)">30</div><div class="t" style="left:1135.60px;top:617.50px;font-size:12.0px;line-height:12.0px;letter-spacing:0.214px;color:#1f1f1f;transform:scaleX(1.12)">20</div><div class="t" style="left:459.60px;top:635.35px;font-size:12.0px;line-height:12.0px;letter-spacing:0.136px;color:#1f1f1f;transform:scaleX(1.12)">0312-1</div><div class="t" style="left:568.10px;top:635.35px;font-size:12.0px;line-height:12.0px;letter-spacing:0.000px;color:#1f1f1f;transform:scaleX(1.1)">1</div><div class="t" style="left:622.13px;top:635.35px;font-size:12.0px;line-height:12.0px;letter-spacing:0.004px;color:#1f1f1f;transform:scaleX(1.12)">1,150</div><div class="t" style="left:707.20px;top:635.35px;font-size:12.0px;line-height:12.0px;letter-spacing:0.268px;color:#1f1f1f;transform:scaleX(1.12)">600</div><div class="t" style="left:760.28px;top:635.35px;font-size:12.0px;line-height:12.0px;letter-spacing:0.234px;color:#1f1f1f;transform:scaleX(1.12)">1200 - 147.5</div><div class="t" style="left:900.70px;top:635.35px;font-size:12.0px;line-height:12.0px;letter-spacing:0.144px;color:#1f1f1f;transform:scaleX(1.13)">Auto Retract</div><div class="t" style="left:1073.50px;top:635.35px;font-size:12.0px;line-height:12.0px;letter-spacing:0.750px;color:#1f1f1f;transform:scaleX(1.12)">30</div><div class="t" style="left:1135.60px;top:635.35px;font-size:12.0px;line-height:12.0px;letter-spacing:0.214px;color:#1f1f1f;transform:scaleX(1.12)">20</div></div>
</body></html>
